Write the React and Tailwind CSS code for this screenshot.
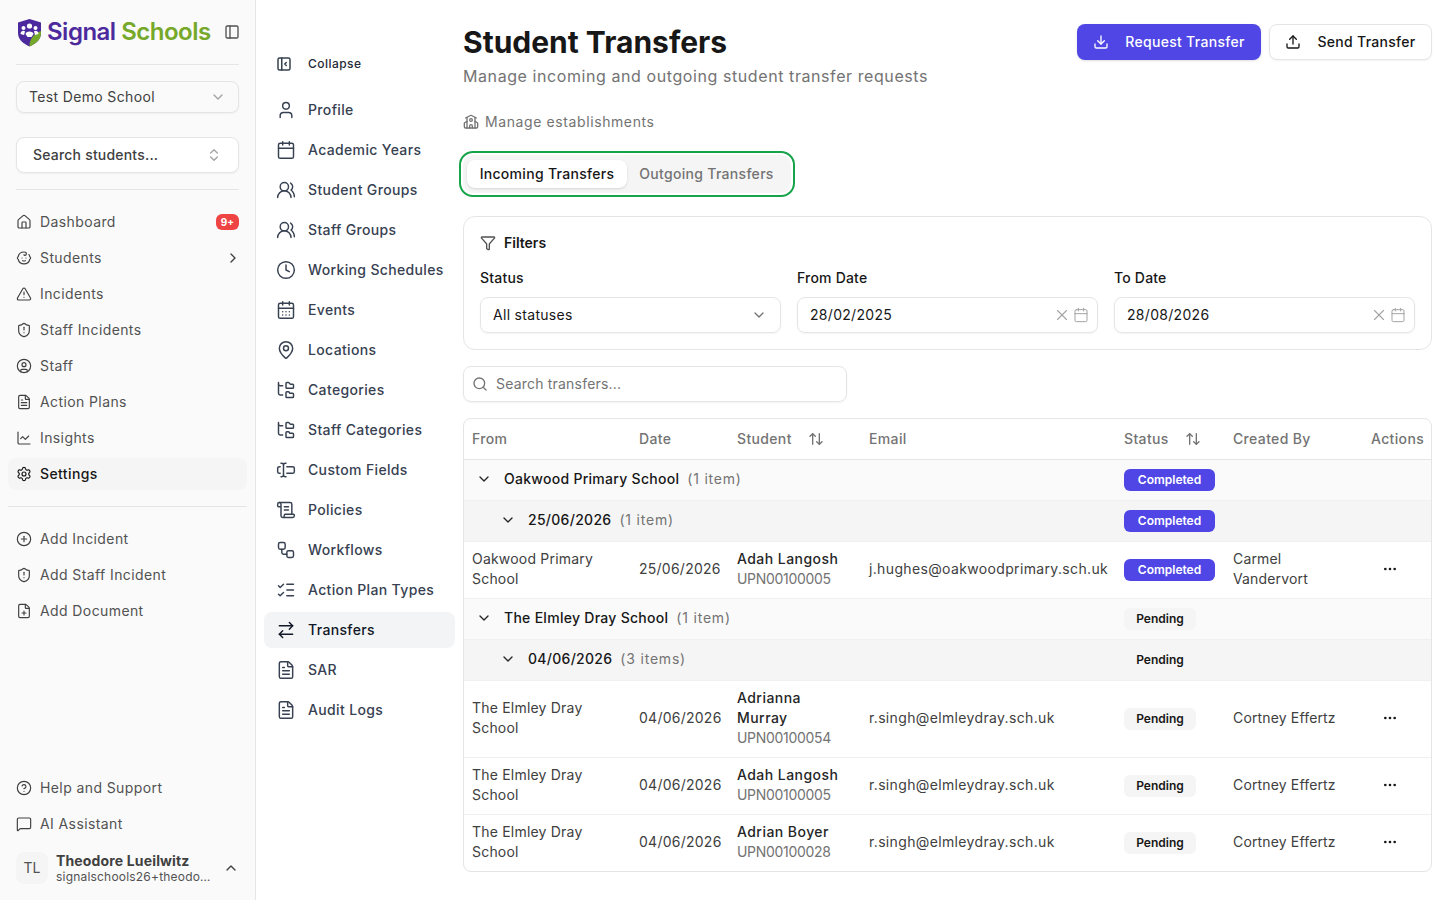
import React from 'react'
import {
  House, Baby, TriangleAlert, ShieldAlert, CircleUser, FileText, ChartLine, Settings, CirclePlus, FilePlus,
  CircleHelp, MessageSquare, PanelLeft, ChevronDown, ChevronsUpDown, ChevronRight, ChevronUp, User, Calendar,
  UsersRound, Clock, CalendarDays, MapPin, FolderTree, TextCursorInput, ScrollText, Workflow, ListChecks,
  ArrowRightLeft, School, Funnel, Download, Upload, X, Search, ArrowUpDown, Ellipsis,
} from 'lucide-react'
import { TbLayoutSidebarLeftCollapse } from 'react-icons/tb'

const mainNav = [
  { label: 'Dashboard', icon: House, badge: '9+' },
  { label: 'Students', icon: Baby, arrow: true },
  { label: 'Incidents', icon: TriangleAlert },
  { label: 'Staff Incidents', icon: ShieldAlert },
  { label: 'Staff', icon: CircleUser },
  { label: 'Action Plans', icon: FileText },
  { label: 'Insights', icon: ChartLine },
  { label: 'Settings', icon: Settings, active: true },
]

const quickNav = [
  { label: 'Add Incident', icon: CirclePlus },
  { label: 'Add Staff Incident', icon: ShieldAlert },
  { label: 'Add Document', icon: FilePlus },
]

const settingsNav = [
  { label: 'Profile', icon: User },
  { label: 'Academic Years', icon: Calendar },
  { label: 'Student Groups', icon: UsersRound },
  { label: 'Staff Groups', icon: UsersRound },
  { label: 'Working Schedules', icon: Clock },
  { label: 'Events', icon: CalendarDays },
  { label: 'Locations', icon: MapPin },
  { label: 'Categories', icon: FolderTree },
  { label: 'Staff Categories', icon: FolderTree },
  { label: 'Custom Fields', icon: TextCursorInput },
  { label: 'Policies', icon: ScrollText },
  { label: 'Workflows', icon: Workflow },
  { label: 'Action Plan Types', icon: ListChecks },
  { label: 'Transfers', icon: ArrowRightLeft, active: true },
  { label: 'SAR', icon: FileText },
  { label: 'Audit Logs', icon: FileText },
]

function Logo() {
  return (
    <div className="flex items-center gap-[5px]">
      <svg width="25" height="29" viewBox="0 0 25 29">
        <path d="M12.5 1 L24 4.5 V15 C24 22 18 26 12.5 28.5 C7 26 1 22 1 15 V4.5 Z" fill="#4c2a9e" />
        <path d="M24 13 V15 C24 22 18 26 12.5 28.5 C12 22 17 15 24 13 Z" fill="#76a82a" />
        <circle cx="12.5" cy="8" r="2.6" fill="#fff" />
        <circle cx="6.5" cy="10" r="2" fill="#fff" />
        <circle cx="18.5" cy="10" r="2" fill="#fff" />
        <path d="M8.5 16 C8.5 12.5 16.5 12.5 16.5 16 L14.5 19 H10.5 Z" fill="#fff" />
        <path d="M3.5 16 C3.5 12.5 7.5 12 8 13.5 L7 17 Z" fill="#fff" />
        <path d="M21.5 16 C21.5 12.5 17.5 12 17 13.5 L18 17 Z" fill="#fff" />
      </svg>
      <span className="text-[24px] leading-8 font-semibold tracking-[-0.5px] whitespace-nowrap">
        <span className="text-[#4c2a9e]">Signal</span> <span className="text-[#76a82a]">Schools</span>
      </span>
    </div>
  )
}

function MainLink({ item }) {
  const Icon = item.icon
  return (
    <div className={`h-8 px-2 flex items-center gap-2 rounded-lg text-sm tracking-[0.4px] ${item.active ? 'bg-[#f5f5f5] text-[#171717] font-medium' : 'text-[#525252]'}`}>
      <Icon size={16} strokeWidth={1.75} className={item.active ? 'text-[#171717]' : 'text-[#404040]'} />
      <span className="flex-1">{item.label}</span>
      {item.badge && (
        <span className="h-4 px-[5px] rounded-md bg-[#ef4444] text-white text-[10px] leading-4 font-bold tracking-normal">{item.badge}</span>
      )}
      {item.arrow && <ChevronRight size={16} className="text-[#404040] mr-[-2px]" />}
    </div>
  )
}

function Sidebar() {
  return (
    <aside className="w-[256px] shrink-0 h-full bg-[#fafafa] border-r border-[#e5e5e5] flex flex-col px-2">
      <div className="h-[65px] mx-2 flex items-center justify-between border-b border-[#e5e5e5] pl-[1px]">
        <Logo />
        <PanelLeft size={16} className="text-[#525252] mr-[-1px]" />
      </div>
      <div className="mx-2 mt-4 h-8 px-3 flex items-center justify-between rounded-lg border border-[#e5e5e5] bg-[#fafafa] shadow-xs text-sm tracking-[0.35px] text-[#404040]">
        Test Demo School
        <ChevronDown size={16} className="text-[#a3a3a3]" />
      </div>
      <div className="mx-2 mt-6 h-9 pl-4 pr-3 flex items-center justify-between rounded-lg border border-[#e5e5e5] bg-white shadow-xs text-sm font-medium tracking-[0.2px] text-[#404040]">
        Search students...
        <ChevronsUpDown size={16} className="text-[#a3a3a3] mr-1" />
      </div>
      <div className="mx-2 mt-4 border-b border-[#e5e5e5]" />
      <nav className="mt-4 flex flex-col gap-1">
        {mainNav.map((item) => <MainLink key={item.label} item={item} />)}
      </nav>
      <div className="mt-4 border-b border-[#e5e5e5]" />
      <nav className="mt-4 flex flex-col gap-1">
        {quickNav.map((item) => <MainLink key={item.label} item={item} />)}
      </nav>
      <div className="mt-auto flex flex-col gap-1">
        <MainLink item={{ label: 'Help and Support', icon: CircleHelp }} />
        <MainLink item={{ label: 'AI Assistant', icon: MessageSquare }} />
      </div>
      <div className="mt-3 mb-4 mx-2 h-8 flex items-center gap-2">
        <div className="w-8 h-8 rounded-lg bg-[#f5f5f5] flex items-center justify-center text-sm text-[#525252]">TL</div>
        <div className="w-[156px] min-w-0">
          <div className="text-sm leading-[17px] font-bold text-[#404040] tracking-[0.15px]">Theodore Lueilwitz</div>
          <div className="text-xs leading-[16px] text-[#525252] truncate tracking-[0.2px]">signalschools26+theodore@gmail.com</div>
        </div>
        <ChevronUp size={16} className="ml-auto mr-0 text-[#404040]" />
      </div>
    </aside>
  )
}

function SettingsNav() {
  return (
    <nav className="w-[207px] shrink-0 px-2 pt-[46px] flex flex-col gap-1">
      <div className="h-9 mb-[6px] px-3 flex items-center gap-[15px] text-xs font-medium text-[#1f2937] tracking-[0.45px]">
        <TbLayoutSidebarLeftCollapse size={18} className="text-[#374151] ml-[-1px]" />
        Collapse
      </div>
      {settingsNav.map((item) => {
        const Icon = item.icon
        return (
          <div key={item.label} className={`h-9 pl-3 pr-1 flex items-center gap-3 rounded-lg text-sm font-medium tracking-[0.35px] whitespace-nowrap ${item.active ? 'bg-[#f3f4f6] text-[#111827]' : 'text-[#374151]'}`}>
            <Icon size={20} strokeWidth={1.75} className="shrink-0" />
            {item.label}
          </div>
        )
      })}
    </nav>
  )
}

function DateField({ value }) {
  return (
    <div className="mt-[9px] h-9 pl-3 pr-2 flex items-center rounded-lg border border-[#e5e5e5] shadow-xs text-sm tracking-[0.3px] text-[#171717]">
      <span className="flex-1">{value}</span>
      <X size={18} strokeWidth={1.5} className="text-[#a3a3a3] mr-[2px]" />
      <Calendar size={16} strokeWidth={1.5} className="text-[#a3a3a3]" />
    </div>
  )
}

function Filters() {
  return (
    <section className="h-[134px] rounded-xl border border-[#e5e5e5] p-4">
      <div className="h-5 flex items-center gap-2 text-sm font-semibold text-[#171717]">
        <Funnel size={16} className="text-[#525252]" />
        Filters
      </div>
      <div className="mt-[15px] grid grid-cols-3 gap-4">
        <div>
          <div className="text-sm leading-5 font-medium tracking-[0.2px] text-[#171717]">Status</div>
          <div className="mt-[9px] h-9 px-3 flex items-center justify-between rounded-lg border border-[#e5e5e5] shadow-xs text-sm tracking-[0.3px] text-[#171717]">
            All statuses
            <ChevronDown size={16} className="text-[#737373] mr-[1px]" />
          </div>
        </div>
        <div>
          <div className="text-sm leading-5 font-medium tracking-[0.2px] text-[#171717]">From Date</div>
          <DateField value="28/02/2025" />
        </div>
        <div>
          <div className="text-sm leading-5 font-medium tracking-[0.2px] text-[#171717]">To Date</div>
          <DateField value="28/08/2026" />
        </div>
      </div>
    </section>
  )
}

function Badge({ status }) {
  if (status === 'Completed') {
    return <span className="block h-[22px] w-[91px] text-center rounded-md bg-[#4f46e5] text-white text-xs leading-[22px] font-semibold">Completed</span>
  }
  return <span className="block h-[22px] w-[72px] text-center rounded-md bg-[#f5f5f5] text-[#171717] text-xs leading-[22px] font-semibold">Pending</span>
}

function GroupRow({ name, count, status, sub }) {
  return (
    <tr className={`h-[41px] border-b border-[#f0f0f0] ${sub ? 'bg-[#f5f5f5]' : 'bg-[#fafafa]'}`}>
      <td colSpan={4} className="px-2 pb-[2px]">
        <div className={`flex items-center gap-3 ${sub ? 'pl-7' : 'pl-1'}`}>
          <ChevronDown size={16} className="text-[#262626]" />
          <span className="flex items-center gap-2">
            <span className="font-medium text-[#171717] tracking-[0.28px]">{name}</span>
            <span className="text-[#737373] tracking-[0.8px]">({count})</span>
          </span>
        </div>
      </td>
      <td className="px-2"><Badge status={status} /></td>
      <td /><td />
    </tr>
  )
}

function DataRow({ from, date, name, upn, email, status, by }) {
  return (
    <tr className="border-b border-[#f0f0f0] last:border-b-0">
      <td className="px-2 pt-[7px] pb-[9px] text-[#404040] tracking-[0.2px]">{from}</td>
      <td className="px-2 pt-[7px] pb-[9px] text-[#404040] tracking-[0.25px]">{date}</td>
      <td className="px-2 pt-[7px] pb-[9px]">
        <div className="font-medium text-[#262626] tracking-[0.45px]">{name}</div>
        <div className="text-[#737373] tracking-[-0.3px]">{upn}</div>
      </td>
      <td className="px-2 pt-[7px] pb-[9px] text-[#404040] tracking-[0.35px]">{email}</td>
      <td className="px-2 py-2"><Badge status={status} /></td>
      <td className="px-2 pt-[7px] pb-[9px] text-[#404040] tracking-[0.15px]">{by}</td>
      <td className="pr-2 pl-[19px] pt-[7px] pb-[9px]"><Ellipsis size={16} className="text-[#171717]" /></td>
    </tr>
  )
}

function TransfersTable() {
  const Head = ({ children, sort }) => (
    <th className="px-2 text-left font-medium text-[#737373] tracking-[0.35px]">
      <span className="inline-flex items-center gap-4">
        {children}
        {sort && <ArrowUpDown size={16} className="text-[#737373]" />}
      </span>
    </th>
  )
  return (
    <div className="mt-4 rounded-lg border border-[#e5e5e5] overflow-hidden">
      <table className="w-[967px] table-fixed text-sm leading-5">
        <colgroup>
          <col className="w-[167px]" />
          <col className="w-[98px]" />
          <col className="w-[132px]" />
          <col className="w-[255px]" />
          <col className="w-[109px]" />
          <col className="w-[138px]" />
          <col className="w-[68px]" />
        </colgroup>
        <thead>
          <tr className="h-[40px] border-b border-[#e5e5e5]">
            <Head>From</Head>
            <Head>Date</Head>
            <Head sort>Student</Head>
            <Head>Email</Head>
            <Head sort>Status</Head>
            <Head>Created By</Head>
            <Head>Actions</Head>
          </tr>
        </thead>
        <tbody>
          <GroupRow name="Oakwood Primary School" count="1 item" status="Completed" />
          <GroupRow sub name="25/06/2026" count="1 item" status="Completed" />
          <DataRow from="Oakwood Primary School" date="25/06/2026" name="Adah Langosh" upn="UPN00100005" email="j.hughes@oakwoodprimary.sch.uk" status="Completed" by="Carmel Vandervort" />
          <GroupRow name="The Elmley Dray School" count="1 item" status="Pending" />
          <GroupRow sub name="04/06/2026" count="3 items" status="Pending" />
          <DataRow from="The Elmley Dray School" date="04/06/2026" name="Adrianna Murray" upn="UPN00100054" email="r.singh@elmleydray.sch.uk" status="Pending" by="Cortney Effertz" />
          <DataRow from="The Elmley Dray School" date="04/06/2026" name="Adah Langosh" upn="UPN00100005" email="r.singh@elmleydray.sch.uk" status="Pending" by="Cortney Effertz" />
          <DataRow from="The Elmley Dray School" date="04/06/2026" name="Adrian Boyer" upn="UPN00100028" email="r.singh@elmleydray.sch.uk" status="Pending" by="Cortney Effertz" />
        </tbody>
      </table>
    </div>
  )
}

export default function App() {
  return (
    <div className="h-screen flex overflow-hidden bg-white font-['Inter',sans-serif]">
      <Sidebar />
      <SettingsNav />
      <main className="w-[969px] shrink-0 pt-6">
        <div className="flex justify-between">
          <div>
            <h1 className="text-[30px] leading-9 font-bold text-[#171717]">Student Transfers</h1>
            <p className="mt-1 text-base leading-6 text-[#737373] tracking-[0.58px]">Manage incoming and outgoing student transfer requests</p>
          </div>
          <div className="flex gap-2">
            <button className="h-9 w-[184px] flex items-center justify-center gap-4 rounded-lg bg-[#4f46e5] text-white text-sm font-medium tracking-[0.3px] shadow-sm">
              <Download size={16} />
              Request Transfer
            </button>
            <button className="h-9 w-[163px] flex items-center justify-center gap-4 rounded-lg border border-[#e5e5e5] bg-white text-[#171717] text-sm font-medium tracking-[0.3px] shadow-xs">
              <Upload size={16} />
              Send Transfer
            </button>
          </div>
        </div>
        <div className="mt-[22px] h-6 flex items-center gap-[6px] text-sm text-[#737373] tracking-[0.6px]">
          <School size={16} />
          Manage establishments
        </div>
        <div className="mt-[21px] w-[328px] h-[38px] p-[5px] pl-1 flex items-center rounded-[10px] bg-[#f5f5f5] outline-2 outline-offset-2 outline-[#16a34a] text-sm font-medium">
          <div className="h-7 w-[160px] flex items-center justify-center rounded-lg bg-white shadow-sm text-[#171717] tracking-[0.3px]">Incoming Transfers</div>
          <div className="h-7 flex-1 flex items-center justify-center text-[#737373] tracking-[0.3px]">Outgoing Transfers</div>
        </div>
        <div className="mt-[23px]">
          <Filters />
        </div>
        <div className="mt-4 w-[384px] h-9 pl-2 flex items-center gap-2 rounded-lg border border-[#e5e5e5] shadow-xs text-sm text-[#737373] tracking-[0.2px]">
          <Search size={16} />
          Search transfers...
        </div>
        <TransfersTable />
      </main>
    </div>
  )
}
